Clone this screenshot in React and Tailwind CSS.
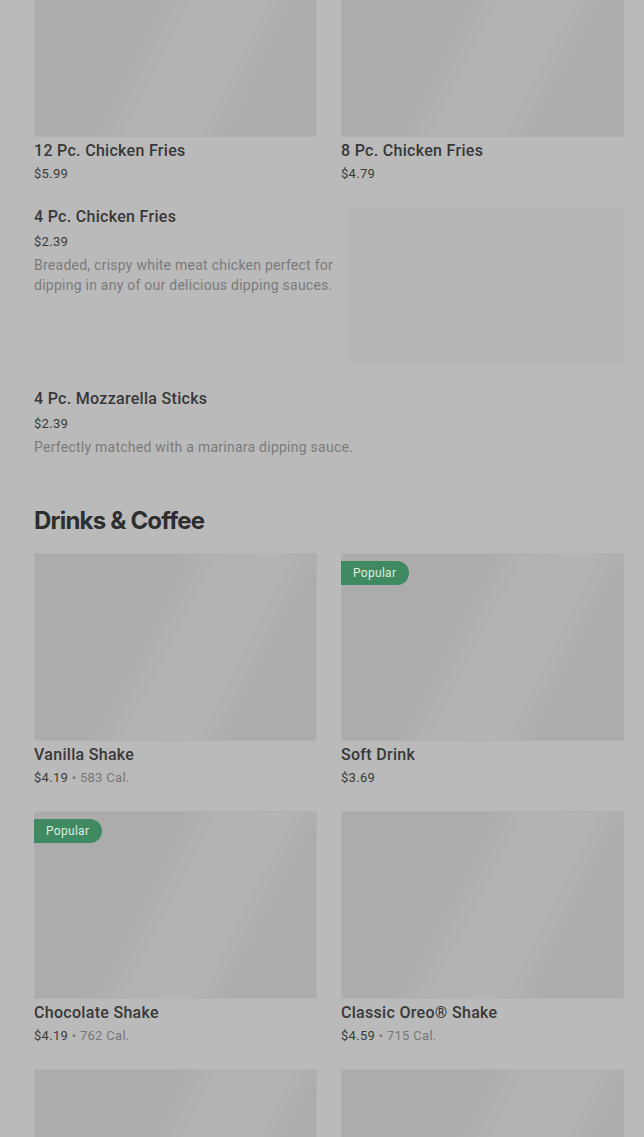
const font = { fontFamily: "Roboto, 'Liberation Sans', sans-serif" };

const topRow = [
  { name: "12 Pc. Chicken Fries", price: "$5.99" },
  { name: "8 Pc. Chicken Fries", price: "$4.79" },
];

const drinks = [
  { name: "Vanilla Shake", price: "$4.19", cal: "583 Cal." },
  { name: "Soft Drink", price: "$3.69", popular: true },
  { name: "Chocolate Shake", price: "$4.19", cal: "762 Cal.", popular: true },
  { name: "Classic Oreo® Shake", price: "$4.59", cal: "715 Cal." },
  { name: "", price: "" },
  { name: "", price: "" },
];

function Placeholder({ className = "" }) {
  return (
    <div
      className={
        "border border-[#b1b1b1] bg-[linear-gradient(117deg,#acacac_38%,#b3b3b3_50%,#b4b4b4_66%,#acacac_78%)] " +
        className
      }
    />
  );
}

function GridCard({ item }) {
  return (
    <div className="flex flex-col">
      <div className="relative">
        <Placeholder className="h-[188px] w-full" />
        {item.popular && (
          <span className="absolute left-0 top-2 flex h-6 items-center rounded-r-full bg-[#3f8a60] pl-3 pr-[13px] text-xs tracking-[0.3px] text-[#dfeae3]">
            Popular
          </span>
        )}
      </div>
      {item.name && (
        <>
          <p className="mt-[4px] text-base font-medium leading-5 tracking-[0.3px] text-[#383838]">
            {item.name}
          </p>
          <p className="mt-1 text-[13px] leading-[18px] tracking-[0.3px] text-[#3a3a3a]">
            {item.price}
            {item.cal && (
              <span className="text-[#777777]"> • {item.cal}</span>
            )}
          </p>
        </>
      )}
    </div>
  );
}

export default function App() {
  return (
    <div
      className="h-[1137px] overflow-hidden bg-[#bababa] pl-[34px] pr-[20px]"
      style={font}
    >
      <div className="-mt-[51px] grid grid-cols-2 gap-x-6">
        {topRow.map((item) => (
          <GridCard key={item.name} item={item} />
        ))}
      </div>

      <div className="mt-[23px] flex gap-3">
        <div className="flex-1 pt-px">
          <p className="text-base font-medium leading-5 tracking-[0.3px] text-[#383838]">
            4 Pc. Chicken Fries
          </p>
          <p className="mt-[5px] text-[13px] leading-5 tracking-[0.3px] text-[#3a3a3a]">
            $2.39
          </p>
          <p className="mt-[3px] text-sm leading-5 tracking-[0.25px] text-[#7a7a7a]">
            Breaded, crispy white meat chicken perfect for dipping in any of our
            delicious dipping sauces.
          </p>
        </div>
        <div className="mt-[2px] h-[155px] w-[275px] shrink-0 border border-[#b4b4b4] bg-[#b6b6b6]" />
      </div>

      <div className="mt-[26px]">
        <p className="text-base font-medium leading-5 tracking-[0.3px] text-[#383838]">
          4 Pc. Mozzarella Sticks
        </p>
        <p className="mt-[5px] text-[13px] leading-5 tracking-[0.3px] text-[#3a3a3a]">
          $2.39
        </p>
        <p className="mt-[3px] text-sm leading-5 tracking-[0.25px] text-[#7a7a7a]">
          Perfectly matched with a marinara dipping sauce.
        </p>
      </div>

      <h2
        className="mt-[48px] text-2xl font-bold leading-8 tracking-[-0.8px] text-[#2e2e2e]"
        style={{ fontFamily: "Inter, 'Liberation Sans', sans-serif" }}
      >
        Drinks &amp; Coffee
      </h2>

      <div className="mt-[16px] grid grid-cols-2 gap-x-6 gap-y-[24px]">
        {drinks.map((item, i) => (
          <GridCard key={i} item={item} />
        ))}
      </div>
    </div>
  );
}
